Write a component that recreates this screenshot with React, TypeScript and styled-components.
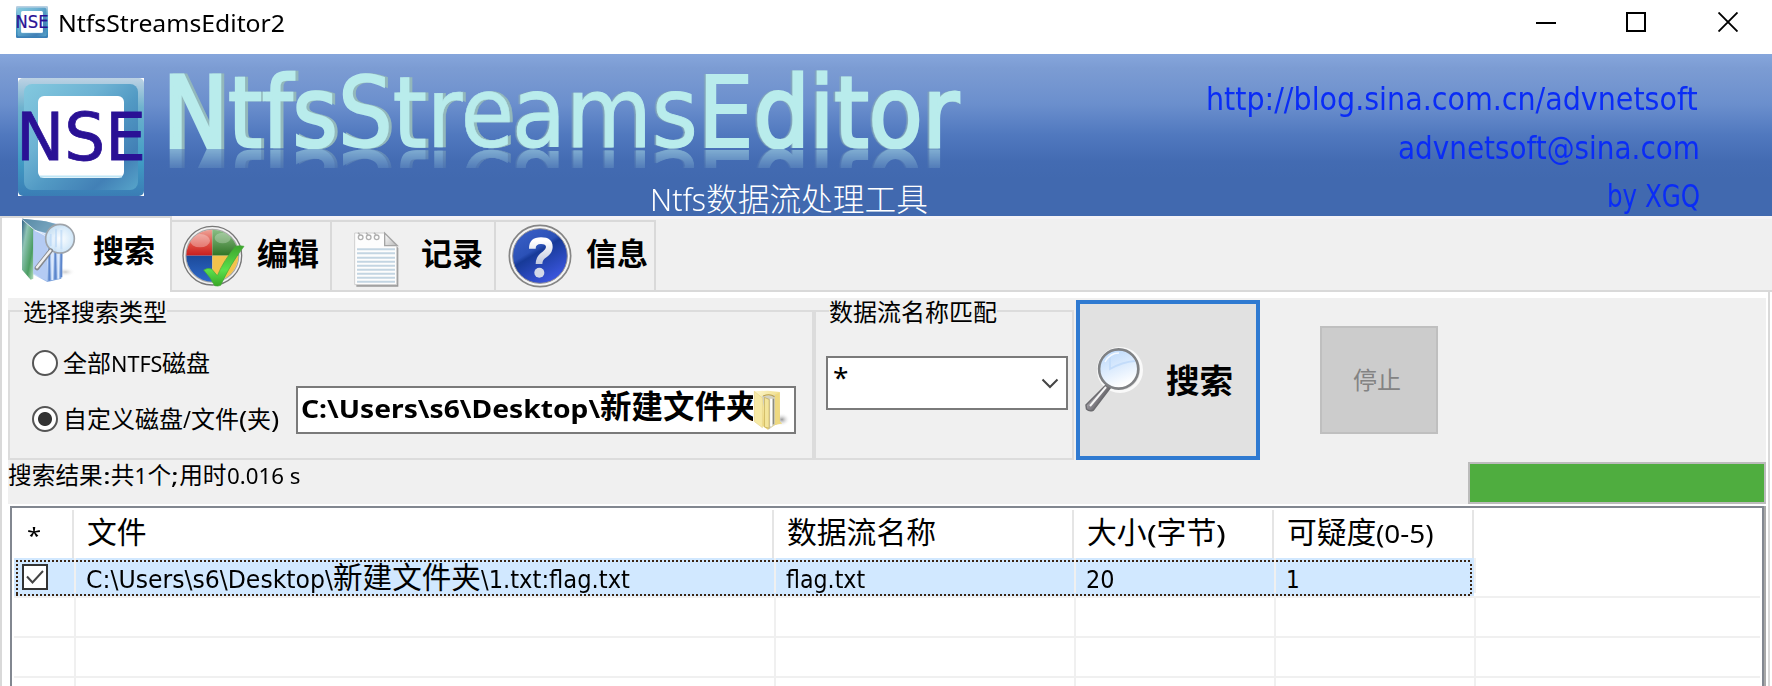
import React, { useLayoutEffect, useRef, useState } from "react";
import styled, { createGlobalStyle, css } from "styled-components";

const GlobalStyle = createGlobalStyle`
  *, *::before, *::after { box-sizing: border-box; }
  html, body { margin: 0; padding: 0; background: #fff; }
  body { overflow: hidden; }
  #root { height: 686px; }
`;

const ui = `"Noto Sans", "Noto Sans CJK SC", sans-serif`;
const tahoma = `"DejaVu Sans Condensed", "DejaVu Sans", "Noto Sans CJK SC", sans-serif`;

/* ---------- text run squeezed or stretched to a fixed width ---------- */

const RunBox = styled.span<{ $w: number; $size?: number; $family?: string }>`
  display: inline-block;
  width: ${(p) => p.$w}px;
  white-space: pre;
  ${(p) => p.$size && css`font-size: ${p.$size}px;`}
  ${(p) => p.$family && css`font-family: ${p.$family};`}
`;
const RunInner = styled.span`
  display: inline-block;
  transform-origin: 0 50%;
`;

function Run({ w, size, family, children }: { w: number; size?: number; family?: string; children: React.ReactNode }) {
  const ref = useRef<HTMLSpanElement>(null);
  const [k, setK] = useState(1);
  useLayoutEffect(() => {
    if (ref.current) setK(w / ref.current.offsetWidth);
  }, [w]);
  return (
    <RunBox $w={w} $size={size} $family={family}>
      <RunInner ref={ref} style={{ transform: `scaleX(${k})` }}>{children}</RunInner>
    </RunBox>
  );
}

/* ---------- title bar ---------- */

const Window = styled.div`
  width: 1772px;
  height: 686px;
  display: flex;
  flex-direction: column;
  overflow: hidden;
  background: #fff;
  color: #000;
  font-family: ${ui};
`;
const TitleBar = styled.header`
  height: 54px;
  flex: none;
  display: flex;
  align-items: flex-start;
  padding: 6px 34px 0 16px;
`;
const WindowTitle = styled.h1`
  margin: 0 0 0 10px;
  font: 400 24px/34px ${ui};
  flex: 1;
`;
const Controls = styled.div`
  display: flex;
  gap: 70px;
  padding-top: 6px;
  svg { display: block; }
  svg:last-child { margin-left: 2px; }
`;

/* ---------- banner ---------- */

const Banner = styled.div`
  height: 162px;
  flex: none;
  display: flex;
  padding: 0 74px 0 18px;
  overflow: hidden;
  background: linear-gradient(#86a6dc 0, #7c9cd3 14px, #6b8fcd 50px, #5179bf 80px, #436bb2 108px, #4169af 125px, #4169af 100%);
`;
const LogoSlot = styled.div`
  padding-top: 24px;
`;
const LogoSvg = styled.svg`
  display: block;
  overflow: visible;
`;
const Wordmark = styled.div`
  width: 810px;
  margin-left: 20px;
`;
const WordmarkSvg = styled.svg`
  display: block;
  -webkit-box-reflect: below 0 linear-gradient(
    transparent 0,
    transparent calc(100% - 19px),
    rgba(0, 0, 0, 0.14) calc(100% - 19px),
    rgba(0, 0, 0, 0.5) 100%
  );
`;
const Subtitle = styled.div`
  margin-top: 34px;
  padding-left: 486px;
  color: #fff;
  font: 300 31.7px/32px ${ui};
  white-space: nowrap;
`;
const Contacts = styled.div`
  flex: 1;
  display: flex;
  flex-direction: column;
  align-items: flex-end;
  padding-top: 21px;
  color: #0a2cf6;
  font: 400 32px/49px ${tahoma};
`;
const ContactLine = styled.a<{ $h?: number; $shift?: number }>`
  height: ${(p) => p.$h ?? 50}px;
  margin-right: ${(p) => p.$shift ?? 0}px;
`;

function Logo({ w, h }: { w: number; h: number }) {
  return (
    <LogoSvg width={w} height={h} viewBox="0 0 126 118" preserveAspectRatio="none">
      <defs>
        <linearGradient id="lgOuter" x1="0" y1="0" x2="0" y2="1">
          <stop offset="0" stopColor="#bdd2e4" />
          <stop offset=".25" stopColor="#6fb2ce" />
          <stop offset=".7" stopColor="#419cc4" />
          <stop offset="1" stopColor="#3a7db5" />
        </linearGradient>
        <linearGradient id="lgInner" x1="0" y1="0" x2="1" y2="1">
          <stop offset="0" stopColor="#83c9df" />
          <stop offset=".35" stopColor="#6db2d3" />
          <stop offset=".55" stopColor="#529ac4" />
          <stop offset=".8" stopColor="#4280b6" />
          <stop offset="1" stopColor="#57a5ca" />
        </linearGradient>
      </defs>
      <rect width="126" height="118" fill="#fff" />
      <rect width="126" height="118" rx="5" fill="url(#lgOuter)" />
      <rect x="6" y="6" width="114" height="106" rx="8" fill="url(#lgInner)" />
      <rect x="20" y="18" width="86" height="82" rx="6" fill="#fff" />
      <path d="M22 98.500h82" stroke="#bfe6f6" strokeWidth="2" />
      <text x="-2" y="82" textLength="130" lengthAdjust="spacingAndGlyphs" fontFamily="DejaVu Sans" fontSize="66" fill="#2a1195" stroke="#2a1195" strokeWidth=".8">NSE</text>
    </LogoSvg>
  );
}

function WordmarkArt() {
  const t = {
    y: 92.5,
    lengthAdjust: "spacingAndGlyphs" as const,
    fontFamily: "DejaVu Sans",
    fontSize: 98,
    fill: "#b9ecec",
    stroke: "#b9ecec",
  };
  return (
    <WordmarkSvg width="810" height="95" viewBox="0 0 810 95">
      <defs>
        <filter id="wmRight" x="-5%" width="110%" y="-10%" height="120%">
          <feDropShadow dx="3" dy="0" stdDeviation=".6" floodColor="#93b8bb" />
        </filter>
        <filter id="wmLeft" x="-5%" width="110%" y="-10%" height="120%">
          <feDropShadow dx="-1.5" dy="0" stdDeviation=".6" floodColor="#86a9bb" />
        </filter>
      </defs>
      <text {...t} x="-1" textLength="351" filter="url(#wmRight)">
        <tspan strokeWidth="4">N</tspan>
        <tspan strokeWidth="2.600">tfs</tspan>
        <tspan strokeWidth="1.500">St</tspan>
        <tspan strokeWidth=".6">re</tspan>
      </text>
      <text {...t} x="348" textLength="447" filter="url(#wmLeft)">
        <tspan strokeWidth="1">ams</tspan>
        <tspan strokeWidth="1.800">E</tspan>
        <tspan strokeWidth="3">ditor</tspan>
      </text>
    </WordmarkSvg>
  );
}

/* ---------- tabs ---------- */

const TabStrip = styled.nav`
  height: 76px;
  flex: none;
  display: flex;
  align-items: flex-start;
  background: linear-gradient(#f5f3f6 0 3px, #f0f0f0 3px 74px, #d9d9d9 74px);
`;
const Tab = styled.div<{ $active?: boolean; $w: number; $pad?: number; $gap?: number; $drop?: number }>`
  width: ${(p) => p.$w}px;
  height: 72px;
  margin-top: 4px;
  display: flex;
  align-items: flex-start;
  gap: ${(p) => p.$gap ?? 12}px;
  border: 2px solid #d9d9d9;
  border-width: 2px 2px 0 0;
  padding-left: ${(p) => p.$pad ?? 10}px;
  font: 700 31px/42px ${ui};
  svg { flex: none; display: block; margin-top: ${(p) => p.$drop ?? 0}px; }
  ${(p) =>
    p.$active &&
    css`
      height: 76px;
      margin-top: 0;
      background: #fff;
      border-left-width: 2px;
    `}
`;
const TabText = styled.span<{ $top: number }>`
  margin-top: ${(p) => p.$top}px;
`;

function SearchFolderIcon() {
  return (
    <svg width="62" height="64" viewBox="66 30 186 192">
      <defs>
        <linearGradient id="sfG" x1="0" y1="0" x2="1" y2="1">
          <stop offset="0" stopColor="#2f5f86" />
          <stop offset=".3" stopColor="#8fc3b4" />
          <stop offset=".7" stopColor="#4b9d62" />
          <stop offset="1" stopColor="#b5ddbf" />
        </linearGradient>
        <linearGradient id="sfB" x1="0" y1="0" x2=".7" y2="1">
          <stop offset="0" stopColor="#3f6c99" />
          <stop offset=".35" stopColor="#a9c6ee" />
          <stop offset=".75" stopColor="#cfe1fb" />
          <stop offset="1" stopColor="#7fa5dd" />
        </linearGradient>
        <radialGradient id="sfL">
          <stop offset="0" stopColor="#fff" />
          <stop offset="1" stopColor="#cbe4f8" />
        </radialGradient>
        <radialGradient id="sfS">
          <stop offset="0" stopColor="#ccc" />
          <stop offset="1" stopColor="#fff" stopOpacity="0" />
        </radialGradient>
      </defs>
      <ellipse cx="196" cy="192" rx="30" ry="14" fill="url(#sfS)" />
      <path d="M66 32l60 6 66 14-8 160-42 10-44-23-32-14z" fill="url(#sfB)" />
      <path d="M66 32l72 8 48 14-24 26-58-14-38-34z" fill="#5f93a8" opacity=".75" />
      <path d="M66 34l34 30v148l-8 3-26-30z" fill="url(#sfG)" />
      <path d="M100 66v130l42 24V84z" fill="#b4cbf3" />
      <path d="M104 66l38 20M66 34l40 34 44 14" stroke="#fff" strokeWidth="3" fill="none" opacity=".7" />
      <path d="M148 86v132M166 86v128M184 120v88" stroke="#5d86cc" strokeWidth="6" />
      <path d="M157 86v130M175 86v126" stroke="#dce9fc" strokeWidth="6" />
      <circle cx="180" cy="92" r="43" fill="url(#sfL)" opacity=".94" />
      <circle cx="180" cy="92" r="43" fill="none" stroke="#9fa4aa" strokeWidth="5" />
      <path d="M152 78v36M168 62v56M184 66v56" stroke="#b6d6f6" strokeWidth="6" opacity=".6" />
      <path d="M152 128l-41 52" stroke="#85888d" strokeWidth="14" strokeLinecap="round" />
      <path d="M151 128l-40 50" stroke="#f0f0f0" strokeWidth="7" strokeLinecap="round" />
    </svg>
  );
}

function EditIcon() {
  return (
    <svg width="64" height="62" viewBox="543 45 192 186">
      <defs>
        <clipPath id="edC"><circle cx="637" cy="137" r="78" /></clipPath>
        <linearGradient id="edR" x1="0" y1="0" x2="0" y2="1"><stop offset="0" stopColor="#f0aba0" /><stop offset=".6" stopColor="#dd4b40" /><stop offset="1" stopColor="#c81e1e" /></linearGradient>
        <linearGradient id="edG" x1="0" y1="0" x2="0" y2="1"><stop offset="0" stopColor="#8fc28a" /><stop offset="1" stopColor="#2f7425" /></linearGradient>
        <linearGradient id="edB" x1="0" y1="0" x2="0" y2="1"><stop offset="0" stopColor="#1c4a9a" /><stop offset="1" stopColor="#2e6acb" /></linearGradient>
        <linearGradient id="edT" x1="0" y1="0" x2="0" y2="1"><stop offset="0" stopColor="#3da52c" /><stop offset=".6" stopColor="#5be04c" /><stop offset="1" stopColor="#38a626" /></linearGradient>
      </defs>
      <circle cx="637" cy="137" r="88" fill="#f1f1f1" stroke="#777" strokeWidth="4" />
      <circle cx="637" cy="137" r="79" fill="none" stroke="#a9a9a9" strokeWidth="4" />
      <g clipPath="url(#edC)">
        <rect x="555" y="55" width="82" height="82" fill="url(#edR)" />
        <rect x="637" y="55" width="82" height="82" fill="url(#edG)" />
        <rect x="555" y="137" width="82" height="82" fill="url(#edB)" />
        <rect x="637" y="137" width="82" height="82" fill="#f2c24c" />
        <ellipse cx="600" cy="92" rx="30" ry="20" fill="#fff" opacity=".3" />
        <ellipse cx="668" cy="84" rx="24" ry="16" fill="#fff" opacity=".25" />
      </g>
      <path d="M611 180q12-8 24-3l17 20q20-48 55-88 12-4 25 0-42 55-70 117-8 4-18 1-12-24-33-47z" fill="url(#edT)" stroke="#43a836" strokeWidth="2" />
    </svg>
  );
}

function NotesIcon() {
  return (
    <svg width="48" height="58" viewBox="70 61 144 174">
      <defs>
        <linearGradient id="ntF" x1="0" y1="0" x2="1" y2="1">
          <stop offset="0" stopColor="#fff" />
          <stop offset="1" stopColor="#b9b9b9" />
        </linearGradient>
      </defs>
      <path d="M80 72h88l38 40v116H80z" fill="#9a9a9a" />
      <path d="M75 67h90l36 40v115H75z" fill="#fdfdfd" stroke="#cfcfcf" strokeWidth="3" />
      <path d="M165 67v38h38z" fill="url(#ntF)" stroke="#a5a5a5" strokeWidth="4" />
      {[116, 128, 141, 153, 165, 177, 189, 201, 213].map((y) => (
        <path key={y} d={`M82 ${y}h114`} stroke="#c3d5e2" strokeWidth="6" />
      ))}
      {[93, 117, 141].map((x) => (
        <g key={x} fill="none" stroke="#b0b0b0" strokeWidth="4">
          <circle cx={x} cy="80" r="7" />
          <path d={`M${x - 8} 66l6 6`} />
        </g>
      ))}
    </svg>
  );
}

function HelpIcon() {
  return (
    <svg width="66" height="66" viewBox="531 39 198 198">
      <defs>
        <linearGradient id="hpB" x1="0" y1="0" x2=".6" y2="1">
          <stop offset="0" stopColor="#3d63c9" />
          <stop offset=".45" stopColor="#2b51b7" />
          <stop offset=".52" stopColor="#173a98" />
          <stop offset="1" stopColor="#3a55dc" />
        </linearGradient>
        <linearGradient id="hpQ" x1="0" y1="0" x2="0" y2="1">
          <stop offset="0" stopColor="#fff" />
          <stop offset="1" stopColor="#c0c8de" />
        </linearGradient>
      </defs>
      <circle cx="630" cy="138" r="92" fill="#f4f4f4" stroke="#858585" strokeWidth="5" />
      <circle cx="630" cy="138" r="82" fill="url(#hpB)" stroke="#8d8d96" strokeWidth="3" />
      <path d="M607 116Q607 92 633 92Q658 92 658 111Q658 124 643 134Q627 144 627 162" fill="none" stroke="url(#hpQ)" strokeWidth="20" />
      <circle cx="628" cy="188" r="15" fill="#d3d9e8" />
    </svg>
  );
}

/* ---------- search panel ---------- */

const Page = styled.main`
  flex: 1;
  display: flex;
  flex-direction: column;
  margin-right: 2px;
  padding: 6px 2px 0 6px;
  border: 2px solid #d9d9d9;
  border-width: 0 2px 0 2px;
`;
const Panel = styled.section`
  height: 206px;
  flex: none;
  background: #f0f0f0;
`;
const Options = styled.div`
  height: 163px;
  display: flex;
  align-items: flex-start;
`;
const Group = styled.fieldset<{ $w: number }>`
  width: ${(p) => p.$w}px;
  height: 161px;
  min-width: 0;
  margin: 1px 0 0;
  padding: 0 0 0 13px;
  border: 2px solid #dcdcdc;
`;
const Legend = styled.legend`
  padding: 0;
  height: 24px;
  font: 400 24px/26px ${ui};
`;
const RadioRow = styled.label<{ $top: number }>`
  display: flex;
  align-items: center;
  height: 26px;
  gap: 5px;
  margin: ${(p) => p.$top}px 0 0 9px;
  font: 400 24px/28px ${ui};
  white-space: nowrap;
`;
const Dot = styled.span<{ $on?: boolean }>`
  width: 26px;
  height: 26px;
  border-radius: 50%;
  border: 2px solid #555;
  background: ${(p) => (p.$on ? "radial-gradient(circle, #333 0 6.5px, #fff 7.5px)" : "#fff")};
`;
const PathRow = styled.div`
  display: flex;
  align-items: flex-start;
  margin-top: 10px;
`;
const PathLabel = styled(RadioRow)`
  width: 264px;
`;
const PathField = styled.div`
  width: 500px;
  height: 48px;
  display: flex;
  border: 2px solid #7a7a7a;
  background: #fff;
  padding-left: 3px;
  font: 700 31.5px/36px ${ui};
  white-space: nowrap;
  overflow: hidden;
  svg { flex: none; margin-top: 2px; }
`;
const PathValue = styled.div`
  width: 452px;
  overflow: hidden;
`;
const Combo = styled.div`
  width: 242px;
  height: 54px;
  margin: 33px 0 0 -3px;
  display: flex;
  justify-content: space-between;
  border: 2px solid #7a7a7a;
  background: #fff;
  padding: 0 7px 0 5px;
  font: 400 28px/39px ${ui};
  svg { margin-top: 19px; }
`;
const SearchButton = styled.button`
  width: 184px;
  height: 160px;
  margin: 2px 0 0 2px;
  padding: 0 0 0 4px;
  display: flex;
  align-items: center;
  gap: 22px;
  border: 4px solid #2f7ad1;
  background: #e1e1e1;
  font: 700 33.500px/40px ${ui};
  color: #000;
`;
const StopButton = styled.button`
  width: 118px;
  height: 108px;
  margin: 28px 0 0 60px;
  padding: 0 4px 0 0;
  border: 2px solid #bfbfbf;
  background: #ccc;
  color: #838383;
  font: 400 24px/30px ${ui};
`;
const StatusRow = styled.div`
  display: flex;
  justify-content: space-between;
  font: 400 23.700px/29px ${ui};
  white-space: nowrap;
`;
const Progress = styled.div`
  width: 298px;
  height: 42px;
  margin-top: 1px;
  border: 2px solid #bcbcbc;
  background: #4fad3f;
`;

function FolderIcon() {
  return (
    <svg width="37" height="41" viewBox="880 300 110 122">
      <defs>
        <linearGradient id="foA" x1="0" y1="0" x2="1" y2="1">
          <stop offset="0" stopColor="#fdf8cf" />
          <stop offset=".6" stopColor="#f0dc84" />
          <stop offset="1" stopColor="#e3c870" />
        </linearGradient>
        <radialGradient id="foS">
          <stop offset="0" stopColor="#999" />
          <stop offset="1" stopColor="#fff" stopOpacity="0" />
        </radialGradient>
      </defs>
      <ellipse cx="966" cy="388" rx="24" ry="20" fill="url(#foS)" />
      <path d="M884 304l40-2 36 4v92l-14 6-22 14-40-28z" fill="url(#foA)" />
      <path d="M906 318l42-4v86l-22 18z" fill="#d3d2c2" />
      <path d="M914 322l14 6v86l-14-4z" fill="#f3e59b" stroke="#c2a850" strokeWidth="2" />
      <path d="M934 326v82" stroke="#fff" strokeWidth="6" />
      <path d="M941 326v76" stroke="#8b8b83" strokeWidth="4" />
      <path d="M884 304l24 20v88l-24-18z" fill="#f6e9a4" stroke="#e9d58a" strokeWidth="2" />
      <path d="M945 314l14-6v84l8 8-22 4z" fill="#eed981" />
      <path d="M910 318q20-8 34 2" stroke="#b99f4e" strokeWidth="3" fill="none" />
    </svg>
  );
}

function MagnifierIcon() {
  return (
    <svg width="60" height="68" viewBox="1084 346 60 68">
      <defs>
        <linearGradient id="mgL" x1="0" y1="0" x2=".4" y2="1">
          <stop offset="0" stopColor="#b6d6fb" />
          <stop offset=".5" stopColor="#d8e9fd" />
          <stop offset="1" stopColor="#fff" />
        </linearGradient>
        <linearGradient id="mgH" x1="0" y1="0" x2="1" y2=".7">
          <stop offset="0" stopColor="#eee" />
          <stop offset=".5" stopColor="#8b888f" />
          <stop offset="1" stopColor="#444" />
        </linearGradient>
      </defs>
      <circle cx="1120" cy="370" r="21.500" fill="none" stroke="#fff" strokeWidth="3" opacity=".8" />
      <path d="M1107 384l3.500 3.500-17 22.500q-4 2-7-1l-.5-4z" fill="url(#mgH)" stroke="#6b6b6f" strokeWidth="1.500" />
      <path d="M1106 387l-16 19" stroke="#f5f5f5" strokeWidth="2" />
      <circle cx="1118.700" cy="369" r="19.600" fill="url(#mgL)" stroke="#7f8184" strokeWidth="2.600" />
      <path d="M1110 357v12q12-7 25-8" fill="none" stroke="#c3dcfa" strokeWidth="1.800" />
      <path d="M1105 362q5-9 14-9" fill="none" stroke="#fff" strokeWidth="1.500" opacity=".8" />
    </svg>
  );
}

/* ---------- results table ---------- */

const Table = styled.section`
  flex: 1;
  margin: 2px 2px 0 2px;
  border: 2px solid #828790;
  border-width: 2px 2px 0 2px;
  box-shadow: 2px 0 0 #a8a8a8;
  padding-left: 2px;
  overflow: hidden;
`;
const HeaderRow = styled.div`
  display: grid;
  grid-template-columns: 60px 700px 300px 200px 200px;
  height: 50px;
  padding-top: 2px;
`;
const HeaderCell = styled.div`
  border-right: 2px solid #e5e5e5;
  padding-left: 13px;
  font: 400 29.800px/43px ${ui};
  white-space: nowrap;
`;
const Row = styled.div<{ $selected?: boolean }>`
  width: 1746px;
  height: 40px;
  display: grid;
  grid-template-columns: 62px 700px 300px 200px 200px;
  border-bottom: 2px solid #f0f0f0;
  ${(p) =>
    p.$selected &&
    css`
      background:
        repeating-linear-gradient(90deg, #3a2412 0 2px, #d1e8ff 2px 4px) 2px 2px / 1456px 2px no-repeat,
        repeating-linear-gradient(90deg, #3a2412 0 2px, #d1e8ff 2px 4px) 2px 36px / 1456px 2px no-repeat,
        repeating-linear-gradient(#3a2412 0 2px, #d1e8ff 2px 4px) 2px 2px / 2px 36px no-repeat,
        repeating-linear-gradient(#3a2412 0 2px, #d1e8ff 2px 4px) 1456px 2px / 2px 36px no-repeat,
        linear-gradient(#d1e8ff, #d1e8ff) 0 0 / 1460px 38px no-repeat;
    `}
`;
const Cell = styled.div<{ $selected?: boolean }>`
  height: ${(p) => (p.$selected ? 35 : 38)}px;
  border-right: 2px solid #f0f0f0;
  padding-left: 10px;
  font: 400 29.600px/37px ${ui};
  white-space: nowrap;
`;
const CheckCell = styled(Cell)`
  padding: 6px 0 0 8px;
  line-height: 0;
`;
const CheckBox = styled.span`
  display: inline-block;
  width: 26px;
  height: 26px;
  border: 2px solid #333;
  background: #fff;
`;

export default function App() {
  return (
    <Window>
      <GlobalStyle />
      <TitleBar>
        <Logo w={32} h={32} />
        <WindowTitle><Run w={227}>NtfsStreamsEditor2</Run></WindowTitle>
        <Controls>
          <svg width="20" height="20" shapeRendering="crispEdges"><rect y="10" width="20" height="2" /></svg>
          <svg width="20" height="20" shapeRendering="crispEdges"><rect x="1" y="1" width="18" height="18" fill="none" stroke="#000" strokeWidth="2" /></svg>
          <svg width="20" height="20"><path d="M.5 .5l19 19M19.500 .5l-19 19" stroke="#000" strokeWidth="1.900" /></svg>
        </Controls>
      </TitleBar>

      <Banner>
        <LogoSlot><Logo w={126} h={118} /></LogoSlot>
        <Wordmark>
          <WordmarkArt />
          <Subtitle><Run w={56} size={32}>Ntfs</Run>数据流处理工具</Subtitle>
        </Wordmark>
        <Contacts>
          <ContactLine><Run w={492}>http://blog.sina.com.cn/advnetsoft</Run></ContactLine>
          <ContactLine $h={48} $shift={-2}><Run w={302}>advnetsoft@sina.com</Run></ContactLine>
          <ContactLine $shift={-2}><Run w={93}>by XGQ</Run></ContactLine>
        </Contacts>
      </Banner>

      <TabStrip>
        <Tab $active $w={172} $pad={20} $gap={9}><SearchFolderIcon /><TabText $top={11}>搜索</TabText></Tab>
        <Tab $w={160} $pad={9} $drop={3}><EditIcon /><TabText $top={10}>编辑</TabText></Tab>
        <Tab $w={164} $pad={21} $drop={9} $gap={20}><NotesIcon /><TabText $top={10}>记录</TabText></Tab>
        <Tab $w={160} $pad={11} $drop={1} $gap={13}><HelpIcon /><TabText $top={10}>信息</TabText></Tab>
      </TabStrip>

      <Page>
        <Panel>
          <Options>
            <Group $w={806}>
              <Legend>选择搜索类型</Legend>
              <RadioRow $top={27}>
                <Dot />
                <span>全部<Run w={51} size={22}>NTFS</Run>磁盘</span>
              </RadioRow>
              <PathRow>
                <PathLabel $top={20}>
                  <Dot $on />
                  <span>自定义磁盘<Run w={8}>/</Run>文件<Run w={8}>(</Run>夹<Run w={8}>)</Run></span>
                </PathLabel>
                <PathField>
                  <PathValue><Run w={299} size={25}>C:\Users\s6\Desktop\</Run>新建文件夹</PathValue>
                  <FolderIcon />
                </PathField>
              </PathRow>
            </Group>
            <Group $w={260}>
              <Legend>数据流名称匹配</Legend>
              <Combo>
                <span>*</span>
                <svg width="18" height="14" viewBox="0 0 18 14"><path d="M1.500 2.500l7.500 7.500 7.500-7.500" fill="none" stroke="#444" strokeWidth="2" /></svg>
              </Combo>
            </Group>
            <SearchButton><MagnifierIcon />搜索</SearchButton>
            <StopButton>停止</StopButton>
          </Options>
          <StatusRow>
            <span>
              搜索结果<Run w={8} size={22}>:</Run>共<Run w={13} size={22}>1</Run>个<Run w={8} size={22}>;</Run>用时<Run w={74} size={22}>0.016 s</Run>
            </span>
            <Progress />
          </StatusRow>
        </Panel>

        <Table>
          <HeaderRow>
            <HeaderCell><Run w={14} size={22}>*</Run></HeaderCell>
            <HeaderCell>文件</HeaderCell>
            <HeaderCell>数据流名称</HeaderCell>
            <HeaderCell>大小<Run w={10} size={26}>(</Run>字节<Run w={10} size={26}>)</Run></HeaderCell>
            <HeaderCell>可疑度<Run w={58} size={25}>(0-5)</Run></HeaderCell>
          </HeaderRow>
          <Row $selected>
            <CheckCell $selected>
              <CheckBox>
                <svg width="22" height="22"><path d="M3 10.500l5.500 6L19 5" fill="none" stroke="#444" strokeWidth="2" /></svg>
              </CheckBox>
            </CheckCell>
            <Cell $selected>
              <Run w={247} size={24} family={tahoma}>C:\Users\s6\Desktop\</Run>新建文件夹<Run w={149} size={24} family={tahoma}>\1.txt:flag.txt</Run>
            </Cell>
            <Cell $selected><Run w={79} size={24} family={tahoma}>flag.txt</Run></Cell>
            <Cell $selected><Run w={28} size={24} family={tahoma}>20</Run></Cell>
            <Cell $selected><Run w={14} size={24} family={tahoma}>1</Run></Cell>
          </Row>
          {[0, 1, 2].map((r) => (
            <Row key={r}>
              {[0, 1, 2, 3, 4].map((c) => <Cell key={c} />)}
            </Row>
          ))}
        </Table>
      </Page>
    </Window>
  );
}
